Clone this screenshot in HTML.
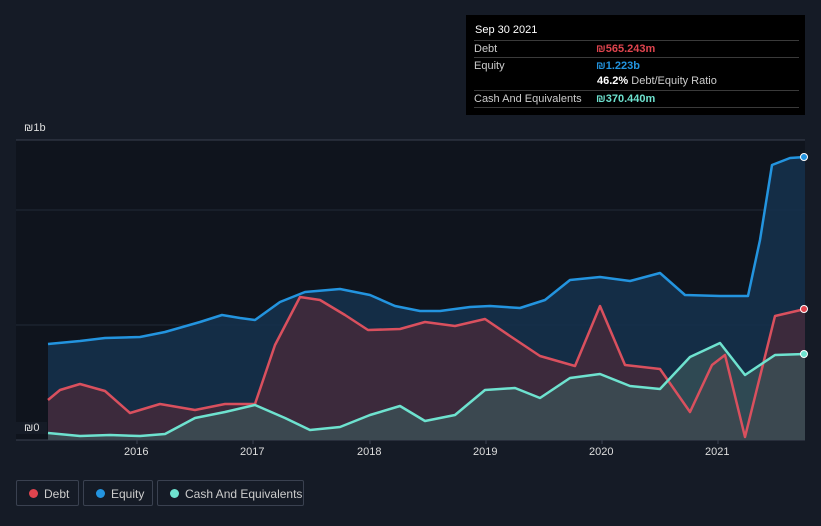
<!DOCTYPE html>
<html><head><style>
body{margin:0;background:#151b26;font-family:"Liberation Sans",sans-serif;}
.wrap{position:relative;width:821px;height:526px;overflow:hidden;background:#151b26;}
.tip{position:absolute;left:466px;top:15px;width:339px;height:100px;background:#000;color:#ccc;font-size:11px;}
.tip .r{position:absolute;left:8px;right:6px;height:17px;border-top:1px solid #3a3a3a;}
.lg{position:absolute;top:480px;height:26px;border:1px solid #3a4150;border-radius:2px;color:#ccc;font-size:12px;line-height:26px;box-sizing:border-box;}
.lg i{position:absolute;left:12px;top:8px;width:9px;height:9px;border-radius:50%;}
.lg span{position:absolute;left:27px;}
.ax{position:absolute;color:#ddd;font-size:11px;}
</style></head><body><div class="wrap">
<svg width="821" height="526" style="position:absolute;left:0;top:0">
<rect x="16" y="140" width="789" height="300" fill="#0f141d"/>
<line x1="16" y1="140" x2="805" y2="140" stroke="#3a4150"/>
<line x1="16" y1="210" x2="805" y2="210" stroke="#222a36"/>
<line x1="16" y1="325" x2="805" y2="325" stroke="#222a36"/>
<line x1="16" y1="440" x2="805" y2="440" stroke="#3a4150"/>
<polygon fill="#15304b" opacity="0.9" points="48,440 48,344 80,341 105,338 140,337 165,332 200,322 222,315 240,318 255,320 280,302 305,292 340,289 370,295 395,306 420,311 440,311 470,307 490,306 520,308 545,300 570,280 600,277 630,281 660,273 685,295 720,296 748,296 760,240 772,165 790,158 805,157 805,440"/>
<polygon fill="#4a2a3a" opacity="0.75" points="48,440 48,400 60,390 80,384 105,391 130,413 160,404 195,410 225,404 255,404 275,345 300,297 320,300 345,315 368,330 400,329 425,322 455,326 485,319 510,336 540,356 575,366 600,306 625,365 660,369 690,412 712,365 725,355 745,437 775,316 805,309 805,440"/>
<polygon fill="#3a5558" opacity="0.7" points="48,440 48,433 80,436 110,435 140,436 165,434 195,418 225,412 255,405 285,418 310,430 340,427 370,415 400,406 425,421 455,415 485,390 515,388 540,398 570,378 600,374 630,386 660,389 690,357 720,343 745,375 775,355 805,354 805,440"/>
<g fill="none" stroke-width="2.5" stroke-linejoin="round">
<polyline stroke="#2394df" points="48,344 80,341 105,338 140,337 165,332 200,322 222,315 240,318 255,320 280,302 305,292 340,289 370,295 395,306 420,311 440,311 470,307 490,306 520,308 545,300 570,280 600,277 630,281 660,273 685,295 720,296 748,296 760,240 772,165 790,158 805,157"/>
<polyline stroke="#d9505e" points="48,400 60,390 80,384 105,391 130,413 160,404 195,410 225,404 255,404 275,345 300,297 320,300 345,315 368,330 400,329 425,322 455,326 485,319 510,336 540,356 575,366 600,306 625,365 660,369 690,412 712,365 725,355 745,437 775,316 805,309"/>
<polyline stroke="#6ee2cf" points="48,433 80,436 110,435 140,436 165,434 195,418 225,412 255,405 285,418 310,430 340,427 370,415 400,406 425,421 455,415 485,390 515,388 540,398 570,378 600,374 630,386 660,389 690,357 720,343 745,375 775,355 805,354"/>
</g>
<circle cx="804" cy="157" r="3.5" fill="#2394df" stroke="#fff"/>
<circle cx="804" cy="309" r="3.5" fill="#e0444e" stroke="#fff"/>
<circle cx="804" cy="354" r="3.5" fill="#6ee2cf" stroke="#fff"/>
<g stroke="#3a4150"><line x1="137" y1="440" x2="137" y2="444"/><line x1="253" y1="440" x2="253" y2="444"/><line x1="370" y1="440" x2="370" y2="444"/><line x1="486" y1="440" x2="486" y2="444"/><line x1="602" y1="440" x2="602" y2="444"/><line x1="718" y1="440" x2="718" y2="444"/></g>
</svg>
<div class="ax" style="left:24px;top:122px">₪1b</div>
<div class="ax" style="left:16px;top:422px;background:#151b26;padding:0 8px">₪0</div>
<div class="ax" style="left:124px;top:446px">2016</div>
<div class="ax" style="left:240px;top:446px">2017</div>
<div class="ax" style="left:357px;top:446px">2018</div>
<div class="ax" style="left:473px;top:446px">2019</div>
<div class="ax" style="left:589px;top:446px">2020</div>
<div class="ax" style="left:705px;top:446px">2021</div>
<div class="tip">
<div style="position:absolute;left:9px;top:9px;color:#fff;font-size:11px">Sep 30 2021</div>
<div class="r" style="top:25px"><span style="position:absolute;left:0;top:2px">Debt</span><span style="position:absolute;left:122px;top:2px;color:#e0444e;font-weight:bold">₪565.243m</span></div>
<div class="r" style="top:42px"><span style="position:absolute;left:0;top:2px">Equity</span><span style="position:absolute;left:122px;top:2px;color:#2394df;font-weight:bold">₪1.223b</span></div>
<div style="position:absolute;left:131px;top:60px"><b style="color:#fff">46.2%</b> Debt/Equity Ratio</div>
<div class="r" style="top:75px"><span style="position:absolute;left:0;top:2px">Cash And Equivalents</span><span style="position:absolute;left:122px;top:2px;color:#6ee2cf;font-weight:bold">₪370.440m</span></div>
<div class="r" style="top:92px;height:0"></div>
</div>
<div class="lg" style="left:16px;width:63px"><i style="background:#e0444e"></i><span>Debt</span></div>
<div class="lg" style="left:83px;width:70px"><i style="background:#2394df"></i><span>Equity</span></div>
<div class="lg" style="left:157px;width:147px"><i style="background:#6ee2cf"></i><span>Cash And Equivalents</span></div>
</div></body></html>
